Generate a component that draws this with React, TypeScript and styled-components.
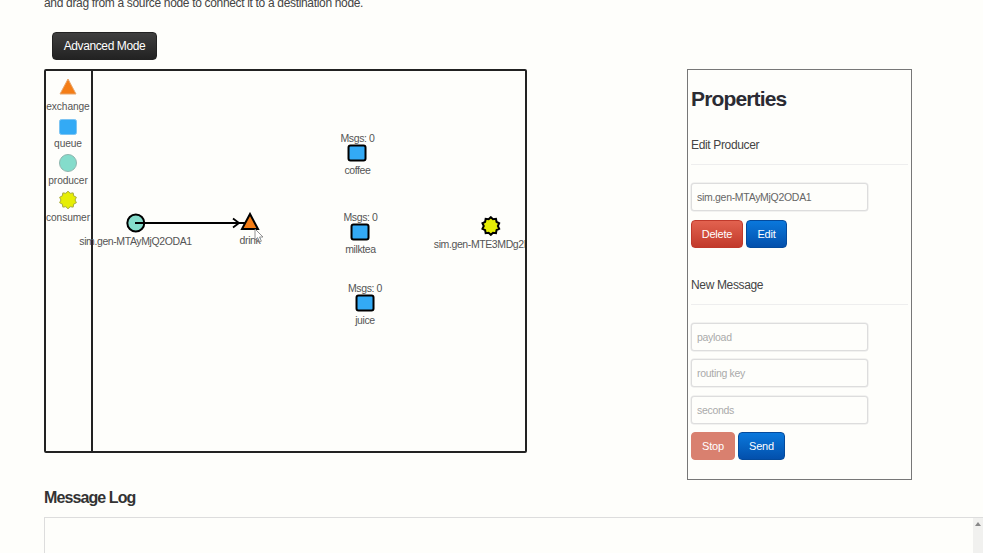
import React from 'react';
import styled, {createGlobalStyle} from 'styled-components';

const GlobalStyle = createGlobalStyle`
  html, body {
    margin: 0;
    padding: 0;
    background: #fefefb;
    overflow: hidden;
  }
  body {
    font-family: "Liberation Sans", Arial, sans-serif;
    color: #333;
  }
`

const starPoints = (cx: number, cy: number, r: number) => {
    const pts: string[] = [];
    for (let i = 0; i < 20; i++) {
        const radius = i % 2 === 0 ? r : r * 0.8;
        const a = (Math.PI * i) / 10;
        pts.push(`${(cx + radius * Math.sin(a)).toFixed(2)},${(cy - radius * Math.cos(a)).toFixed(2)}`);
    }
    return pts.join(' ');
};

type IconProps = { bold?: boolean };

const stroke = (bold?: boolean, soft = '#9aa') => ({
    stroke: bold ? '#000' : soft,
    strokeWidth: bold ? 2 : 1,
});

const ExchangeIcon = ({bold}: IconProps) => (
    <svg width="22" height="20" viewBox="0 0 22 20">
        <polygon points="11,2 19,17 3,17" fill="#f47d16" {...stroke(bold, '#e9a76d')} strokeLinejoin="miter"/>
    </svg>
);

const QueueIcon = ({bold}: IconProps) => (
    <svg width="20" height="18" viewBox="0 0 20 18">
        <rect x="1.5" y="1.5" width="17" height="15" rx="2" fill="#33aaf5" {...stroke(bold, '#7cc4f2')}/>
    </svg>
);

const ProducerIcon = ({bold}: IconProps) => (
    <svg width="20" height="20" viewBox="0 0 20 20">
        <circle cx="10" cy="10" r="8.5" fill="#84dccb" {...stroke(bold, '#8fb5ae')}/>
    </svg>
);

const ConsumerIcon = ({bold}: IconProps) => (
    <svg width="20" height="20" viewBox="0 0 20 20">
        <polygon points={starPoints(10, 10, 8.8)} fill="#e6ee05" {...stroke(bold, '#a9ad3c')}/>
    </svg>
);

export default function App() {
    return (
        <Page>
            <GlobalStyle/>
            <Intro>and drag from a source node to connect it to a destination node.</Intro>
            <AdvancedButton>Advanced Mode</AdvancedButton>
            <Workspace>
                <Canvas>
                    <Palette>
                        <PaletteItem $extra><ExchangeIcon/><span>exchange</span></PaletteItem>
                        <PaletteItem><QueueIcon/><span>queue</span></PaletteItem>
                        <PaletteItem><ProducerIcon/><span>producer</span></PaletteItem>
                        <PaletteItem><ConsumerIcon/><span>consumer</span></PaletteItem>
                    </Palette>
                    <Stage>
                        <Node $x={42.5} $y={142}>
                            <ProducerIcon bold/>
                            <NodeLabel>sim.gen-MTAyMjQ2ODA1</NodeLabel>
                        </Node>
                        <Node $x={157} $y={141}>
                            <ExchangeIcon bold/>
                            <NodeLabel>drink</NodeLabel>
                        </Node>
                        <Node $x={264.5} $y={61}>
                            <Count>Msgs: 0</Count>
                            <QueueIcon bold/>
                            <NodeLabel>coffee</NodeLabel>
                        </Node>
                        <Node $x={267.5} $y={140}>
                            <Count>Msgs: 0</Count>
                            <QueueIcon bold/>
                            <NodeLabel>milktea</NodeLabel>
                        </Node>
                        <Node $x={272} $y={211}>
                            <Count>Msgs: 0</Count>
                            <QueueIcon bold/>
                            <NodeLabel>juice</NodeLabel>
                        </Node>
                        <Node $x={398} $y={145}>
                            <ConsumerIcon bold/>
                            <NodeLabel>sim.gen-MTE3MDg2NTA1</NodeLabel>
                        </Node>
                        <Edge width="120" height="14" viewBox="0 0 120 14">
                            <path d="M0 7H110M98 2.5L104 7L98 11.5" fill="none" stroke="#000" strokeWidth="1.8"/>
                        </Edge>
                        <Cursor width="11" height="15" viewBox="0 0 11 15">
                            <path d="M1 1V12L3.6 9.6L5.6 14L7.4 13.2L5.5 9H9Z" fill="#fff" stroke="#777" strokeWidth="0.8"/>
                        </Cursor>
                    </Stage>
                </Canvas>
                <Properties>
                    <PanelTitle>Properties</PanelTitle>
                    <SectionTitle>Edit Producer</SectionTitle>
                    <Fields>
                        <Field value="sim.gen-MTAyMjQ2ODA1" readOnly/>
                    </Fields>
                    <Actions>
                        <ActionButton $kind="danger" $w={52}>Delete</ActionButton>
                        <ActionButton $kind="primary" $w={41}>Edit</ActionButton>
                    </Actions>
                    <SectionTitle $spaced>New Message</SectionTitle>
                    <Fields>
                        <Field placeholder="payload"/>
                        <Field placeholder="routing key"/>
                        <Field placeholder="seconds"/>
                    </Fields>
                    <Actions>
                        <ActionButton $kind="muted" $w={44}>Stop</ActionButton>
                        <ActionButton $kind="primary" $w={47}>Send</ActionButton>
                    </Actions>
                </Properties>
            </Workspace>
            <LogTitle>Message Log</LogTitle>
            <LogBox>
                <ScrollBar>
                    <ScrollArrow/>
                </ScrollBar>
            </LogBox>
        </Page>
    );
};

const Page = styled.div`
  height: 553px;
  box-sizing: border-box;
  padding-left: 44px;
  overflow: hidden;
`

const Intro = styled.p`
  margin: -4px 0 0;
  font-size: 12px;
  letter-spacing: -0.33px;
  line-height: 14px;
  color: #444;
`

const AdvancedButton = styled.button`
  display: block;
  width: 105px;
  height: 28px;
  margin: 22px 0 9px 8px;
  padding: 0;
  border: 1px solid #222;
  border-radius: 4px;
  background: linear-gradient(#3f3f3f, #222);
  color: #fff;
  font-family: inherit;
  font-size: 12px;
  letter-spacing: -0.4px;
`

const Workspace = styled.div`
  display: flex;
  align-items: flex-start;
  gap: 160px;
`

const Canvas = styled.div`
  display: flex;
  width: 483px;
  height: 384px;
  box-sizing: border-box;
  border: 2px solid #222;
  border-radius: 2px;
  overflow: hidden;
`

const Palette = styled.div`
  flex: none;
  width: 47px;
  box-sizing: border-box;
  padding: 6px 1px 0 0;
  border-right: 2px solid #222;
  display: flex;
  flex-direction: column;
  align-items: center;
  gap: 3px;
`

const PaletteItem = styled.div<{ $extra?: boolean }>`
  display: flex;
  flex-direction: column;
  align-items: center;
  padding-bottom: ${p => (p.$extra ? '2px' : '0')};
  font-size: 10.2px;
  letter-spacing: -0.1px;
  line-height: 12px;
  color: #555;

  svg {
    flex: none;
    margin-bottom: ${p => (p.$extra ? '4px' : '2px')};
  }
`

const Stage = styled.div`
  position: relative;
  flex: 1;
`

const Node = styled.div<{ $x: number; $y: number }>`
  position: absolute;
  left: ${p => p.$x}px;
  top: ${p => p.$y}px;
  transform: translateX(-50%);
  display: flex;
  flex-direction: column;
  align-items: center;
  white-space: nowrap;
  font-size: 10.5px;
  letter-spacing: -0.4px;
  color: #555;
`

const Count = styled.span`
  line-height: 12px;
`

const NodeLabel = styled.span`
  margin-top: 2px;
  line-height: 12px;
`

const Edge = styled.svg`
  position: absolute;
  left: 42px;
  top: 145px;
`

const Cursor = styled.svg`
  position: absolute;
  left: 161px;
  top: 157px;
`

const Properties = styled.div`
  width: 225px;
  height: 411px;
  box-sizing: border-box;
  padding: 0 3px;
  border: 1px solid #777;
`

const PanelTitle = styled.h2`
  margin: 16px 0 26px;
  font-size: 21px;
  letter-spacing: -0.85px;
  line-height: 26px;
  font-weight: 700;
  color: #2b2b33;
`

const SectionTitle = styled.h4<{ $spaced?: boolean }>`
  margin: ${p => (p.$spaced ? '30px 0 18.5px' : '0 0 18px')};
  padding-bottom: 12px;
  border-bottom: 1px solid #eee;
  font-size: 12px;
  letter-spacing: -0.35px;
  line-height: 14px;
  font-weight: 400;
  color: #444;
`

const Fields = styled.div`
  display: flex;
  flex-direction: column;
  gap: 8.25px;
`

const Field = styled.input`
  width: 177px;
  height: 28px;
  box-sizing: border-box;
  padding: 0 5px;
  border: 1px solid #ddd;
  border-radius: 3px;
  background: #fefefb;
  box-shadow: 0 0 0 0.5px #e6e6e6;
  outline: none;
  font-family: inherit;
  font-size: 10.5px;
  letter-spacing: -0.3px;
  color: #666;

  &::placeholder {
    color: #aaa;
  }
`

const Actions = styled.div`
  display: flex;
  gap: 3px;
  margin-top: 8.5px;
`

const buttonColors = {
    danger: 'background: linear-gradient(#e2624f, #c23a2b); border-color: #c0392b;',
    primary: 'background: linear-gradient(#0a78dc, #0350ac); border-color: #044a9c;',
    muted: 'background: #d9806f; border-color: #d9806f;',
};

const ActionButton = styled.button<{ $kind: keyof typeof buttonColors; $w: number }>`
  width: ${p => p.$w}px;
  height: 28px;
  padding: 0;
  border: 1px solid;
  border-radius: 4px;
  ${p => buttonColors[p.$kind]}
  color: #fff;
  font-family: inherit;
  font-size: 11px;
  letter-spacing: -0.2px;
`

const LogTitle = styled.h3`
  margin: 8px 0 9px;
  font-size: 16px;
  letter-spacing: -0.9px;
  line-height: 20px;
  font-weight: 700;
  color: #333;
`

const LogBox = styled.div`
  display: flex;
  justify-content: flex-end;
  height: 100px;
  border: 1px solid #ddd;
  border-right: none;
`

const ScrollBar = styled.div`
  width: 10px;
  background: #f1f1ef;
  display: flex;
  justify-content: center;
  padding-top: 4px;
`

const ScrollArrow = styled.div`
  width: 0;
  height: 0;
  border-left: 3px solid transparent;
  border-right: 3px solid transparent;
  border-bottom: 4px solid #888;
`
